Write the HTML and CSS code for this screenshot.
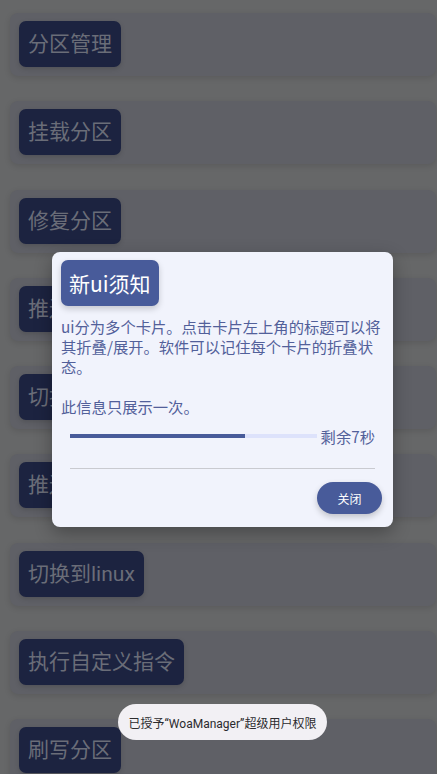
FILE: index.html
```html
<!DOCTYPE html>
<html lang="zh-CN">
<head>
    <meta charset="UTF-8">
    <meta name="viewport" content="width=device-width, initial-scale=1.0">
    <title>WoaManager</title>
    <link rel="stylesheet" href="styles.css">
</head>
<body>
    <main class="list">
        <section class="card"><h2 class="chip">分区管理</h2></section>
        <section class="card"><h2 class="chip">挂载分区</h2></section>
        <section class="card"><h2 class="chip">修复分区</h2></section>
        <section class="card"><h2 class="chip">推送驱动</h2></section>
        <section class="card"><h2 class="chip">切换到windows</h2></section>
        <section class="card"><h2 class="chip">推送引导</h2></section>
        <section class="card"><h2 class="chip">切换到linux</h2></section>
        <section class="card"><h2 class="chip">执行自定义指令</h2></section>
        <section class="card"><h2 class="chip">刷写分区</h2></section>
    </main>

    <div class="dialog">
        <h2 class="dialogTitle">新ui须知</h2>
        <p class="dialogText">ui分为多个卡片。点击卡片左上角的标题可以将其折叠/展开。软件可以记住每个卡片的折叠状态。

此信息只展示一次。</p>
        <div class="timer">
            <div class="track"><div class="fill" style="width: 71%"></div></div>
            <span class="left">剩余7秒</span>
        </div>
        <hr class="divider">
        <div class="actions">
            <button class="closeBtn">关闭</button>
        </div>
    </div>

    <div class="toast">已授予“WoaManager”超级用户权限</div>
</body>
</html>
```

FILE: styles.css
```css
/* 초기화 */
* {box-sizing: border-box;}
body, h2, p {margin: 0; padding: 0;}
body {
    width: 437px; height: 774px; overflow: hidden;
    background: #666768;
    font-family: Roboto, "Noto Sans CJK SC", sans-serif;
}
/* 뒤쪽 카드 목록 (어둡게 가려진 상태) */
.list {display: flex; flex-direction: column; gap: 25.3px;
    padding: 13px 1px 0 10px;}
.card {height: 63px; padding: 8px 9px;
    background: #5f6066; border-radius: 8px;
    box-shadow: 0 2px 6px rgba(0,0,0,0.12);}
.chip {display: inline-block;
    padding: 9px 9px; font-size: 21px; line-height: 28px; font-weight: 400;
    color: #6a6d78; background: #1c2340; border-radius: 7px;
    box-shadow: 0 2px 5px rgba(0,0,0,0.15);
    white-space: nowrap;}
/* 안내 다이얼로그 */
.dialog {position: absolute; top: 252px; left: 52px;
    width: 341px; height: 275px;
    padding: 8px 9px 0;
    background: #f1f3fc; border-radius: 8px;
    box-shadow: 0 6px 18px rgba(0,0,0,0.3);
    font-family: "Noto Sans CJK SC", sans-serif;}
.dialogTitle {display: inline-block;
    padding: 8px 8px; font-size: 21px; line-height: 30px; font-weight: 400;
    color: #fff; background: #485b9a; border-radius: 7px;
    box-shadow: 0 3px 6px rgba(0,0,0,0.18);}
.dialogText {margin-top: 10px; padding-right: 0;
    font-size: 15.3px; line-height: 20px; color: #52609a;
    white-space: pre-line;}
.timer {display: flex; align-items: center; gap: 4px;
    margin: 10px 9px 0 9px;}
.track {flex: 1; height: 4px; background: #dde2fb;}
.fill {height: 100%; background: #485b9a;}
.left {font-size: 15.3px; line-height: 20px; color: #52609a;}
.divider {margin: 22px 9px 0; border: 0; border-top: 1px solid #c9cad0;}
.actions {display: flex; justify-content: flex-end; margin-top: 13px; padding-right: 2px;}
.closeBtn {width: 65px; height: 32px;
    border: 0; border-radius: 16px;
    background: #485b9a; color: #fff;
    font-family: inherit; font-size: 12px;
    box-shadow: 0 3px 6px rgba(0,0,0,0.2);}
/* 토스트 */
.toast {position: absolute; top: 704px; left: 118px;
    width: 209px; height: 36px;
    display: flex; align-items: center; justify-content: center;
    background: #f2f0f4; border-radius: 18px;
    font-size: 12px; color: #2b2b2e;
    white-space: nowrap;}
```
